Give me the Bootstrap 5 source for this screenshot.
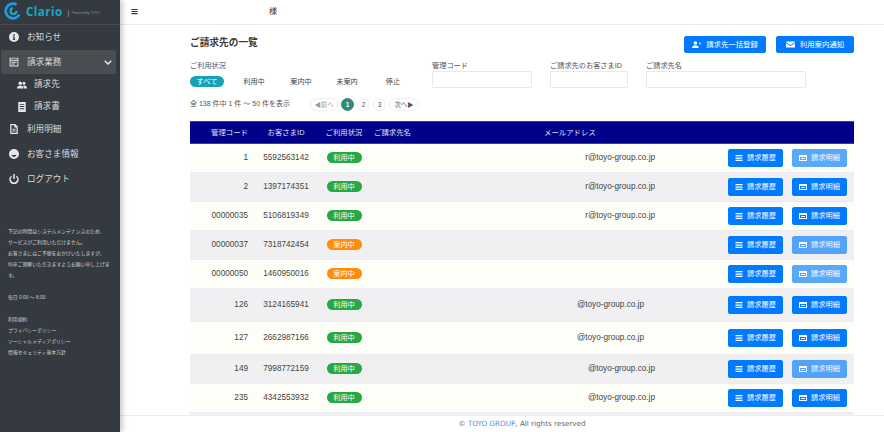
<!DOCTYPE html>
<html lang="ja">
  <head>
    <meta charset="UTF-8" />
    <meta name="viewport" content="width=device-width, initial-scale=1.0" />
    <title>ご請求先の一覧</title>
    <link rel="stylesheet" href="https://cdn.jsdelivr.net/npm/bootstrap@5.3.3/dist/css/bootstrap.min.css" />
    <script src="https://cdn.jsdelivr.net/npm/bootstrap@5.3.3/dist/js/bootstrap.bundle.min.js"></script>
    <style>
      html, body { height: 100%; overflow: hidden; }
      body { font-family: "Liberation Sans", "Noto Sans CJK JP", sans-serif; font-size: 8px; color: #444; background: #fff; }
      .app-shell { height: 432px; }
      .side { width: 120px; background: #343a40; box-shadow: 2px 0 6px rgba(0,0,0,.25); color: #d8dadc; z-index: 2; }
      .brand { height: 25px; padding: 2px 0 0 4px; border-bottom: 1px solid #454b51; gap: 4px; }
      .brand-name { font-family: "Open Sans", sans-serif; font-weight: 700; font-size: 11.5px; letter-spacing: .5px; color: #17a9c0; line-height: 19px; }
      .brand-sub { font-size: 3.4px; color: #8b9096; border-left: 1px solid #777; padding-left: 3px; margin-left: 1px; line-height: 7px; white-space: nowrap; }
      .side-nav { padding: 0 4px 0 1px; }
      .side-link { height: 24px; padding-left: 8px; font-size: 8.6px; color: #d8dadc; gap: 8px; text-decoration: none; margin-bottom: 1px; }
      .side-link.open { background: #494e53; border-radius: 2px; }
      .side-link.sub { height: 19px; padding-left: 16px; gap: 7px; margin-bottom: 2px; }
      .side-link.sub-last { height: 21px; margin-bottom: 0; }
      .side-link svg { width: 10px; height: 10px; flex: none; fill: #e6e7e8; }
      .side-link .chev { width: 8px; height: 8px; margin-right: 4px; }
      .side-note { padding: 0 8px; margin-top: 34px; font-size: 4.85px; line-height: 11px; color: #d0d2d4; }
      .side-note p { margin: 0 0 11px; }
      .top-bar { height: 25px; border-bottom: 1px solid #e9ecef; padding-left: 11px; }
      .top-bar svg { width: 7px; height: 7px; fill: #333; margin-top: -1px; }
      .top-user { margin-left: 131px; font-size: 8px; color: #333; margin-top: -1px; }
      .work { padding: 11px 30px 0 70px; min-height: 0; }
      .page-title { font-size: 9.7px; font-weight: 700; margin: 0; color: #3a3a3a; line-height: 14px; }
      .head-btn { height: 17px; font-size: 7.4px; padding: 0; border-radius: 2px; background: #007bff; border-color: #007bff; gap: 5px; }
      .head-btn svg { width: 9px; height: 9px; fill: #fff; }
      .btn-one { width: 82px; }
      .btn-two { width: 78px; margin-left: 2px; }
      .filter-row { margin-top: 8px; height: 24px; }
      .filter-label { font-size: 7.2px; line-height: 10px; color: #555; white-space: nowrap; }
      .filter-input { height: 17px; border: 1px solid #e6e9ed; border-radius: 1px; background: #fff; }
      .w-status { width: 242px; }
      .w-code { width: 100px; margin-right: 18px; }
      .w-id { width: 78px; margin-right: 18px; }
      .w-name { width: 160px; }
      .status-tabs { margin-top: 5px; font-size: 7.2px; color: #444; }
      .status-tabs span { text-align: center; line-height: 11px; }
      .status-tabs .on { background: #17a2b8; color: #fff; border-radius: 6px; }
      .tab-all { width: 34px; }
      .tab-use { width: 22px; margin-left: 19px; }
      .tab-guide { width: 22px; margin-left: 25px; }
      .tab-none { width: 22px; margin-left: 24px; }
      .tab-stop { width: 16px; margin-left: 27px; }
      .count-row { margin-top: 13px; height: 13px; }
      .count-text { width: 120px; font-size: 7px; white-space: nowrap; color: #555; }
      .pager { gap: 3px; }
      .pager span { height: 13px; min-width: 13px; border: 1px solid #eee; border-radius: 7px; font-size: 6.4px; color: #555; display: flex; align-items: center; justify-content: center; white-space: nowrap; }
      .pager .pg-prev { width: 28px; color: #999; }
      .pager .pg-next { width: 30px; }
      .pager .on { background: #2e8b77; border-color: #2e8b77; color: #fff; font-weight: 700; }
      .list-wrap { margin-top: 10px; }
      .bill-table { width: 664px; table-layout: fixed; margin: 0; font-size: 8.2px; color: #444; border-collapse: collapse; }
      .bill-table > :not(caption) > * > * { padding: 0; vertical-align: middle; background: transparent; box-shadow: none; border: 0; }
      .bill-table thead tr { height: 22px; background: #00008b; color: #dfe0f2; }
      .bill-table thead th { font-weight: 400; font-size: 7.4px; line-height: 12px; white-space: nowrap; border-top: 1px solid #3b3ba6; border-bottom: 1px solid #3b3ba6; }
      .bill-table tbody tr { height: 29px; border-bottom: 1px solid #ececf0; }
      .bill-table tbody tr.tall { height: 33px; }
      .bill-table tbody tr:nth-child(odd) { background: #fefef8; }
      .bill-table tbody tr:nth-child(even) { background: #f0f0f2; }
      .c-code { width: 62px; text-align: right; padding-right: 4px !important; }
      .c-id { width: 68px; text-align: center; }
      .c-state { width: 48px; text-align: center; }
      .c-name { width: 172px; padding-left: 6px !important; }
      .c-mail { width: 180px; text-align: right; padding-right: 65px !important; }
      th.c-mail { text-align: left; padding-left: 4px !important; padding-right: 0 !important; }
      .bill-table tbody tr.inset .c-mail { padding-right: 76px !important; }
      .c-act { padding-left: 8px !important; }
      .act-group { gap: 9px; }
      .state-pill { display: inline-block; width: 35px; height: 11px; line-height: 11px; border-radius: 6px; color: #fff; font-size: 7.2px; text-align: center; }
      .state-on { background: #28a745; }
      .state-guide { background: #ff8c0a; }
      .row-btn { width: 55px; height: 18px; padding: 0; font-size: 7.2px; border-radius: 2px; background: #007bff; border-color: #007bff; gap: 4px; }
      .row-btn svg { width: 8px; height: 8px; fill: #fff; flex: none; }
      .row-btn.disabled { background: #007bff; border-color: #007bff; opacity: .65; }
      .foot-bar { height: 17px; border-top: 1px solid #eee; background: #fff; font-family: "DejaVu Sans", sans-serif; font-size: 7.2px; color: #666; line-height: 15px; text-align: center; padding-left: 40px; }
      .foot-bar a { color: #4a90e2; text-decoration: none; }
    </style>
  </head>
  <body>
    <svg width="0" height="0" class="d-none">
      <symbol id="i-info" viewBox="0 0 16 16"><path fill-rule="evenodd" d="M8 0a8 8 0 1 1 0 16A8 8 0 0 1 8 0zM6.800 3.500v2.400h2.400V3.500zM6 7v1.400h.9v3H6v1.300h4v-1.300h-.9V7z"/></symbol>
      <symbol id="i-form" viewBox="0 0 16 16"><path fill-rule="evenodd" d="M1 1h14v14H1zM2.500 2.500v2h11v-2zM2.500 6v7.500h11V6zM4 7.500h8V9H4zM4 10.500h5V12H4z"/></symbol>
      <symbol id="i-users" viewBox="0 0 20 16"><circle cx="6.500" cy="4.500" r="3.500"/><circle cx="14" cy="4.500" r="3"/><path d="M0 15c0-4 2.500-6 6.500-6s6.500 2 6.500 6zM14 15c0-2.500-.7-4.400-2-5.600 1-.4 1.500-.4 2.500-.4 3.500 0 5.500 2 5.500 6z"/></symbol>
      <symbol id="i-doc" viewBox="0 0 16 16"><path fill-rule="evenodd" d="M2 0h12v16H2zM4.500 3v1.500h7V3zM4.500 6.500V8h7V6.500zM4.500 10v1.500h7V10z"/></symbol>
      <symbol id="i-file" viewBox="0 0 16 16"><path fill-rule="evenodd" d="M2 0h8l4 4v12H2zM4 2v12h8V5.500H8.500V2zM5.500 7.500h5V9h-5zM5.500 10.500h5V12h-5z"/></symbol>
      <symbol id="i-face" viewBox="0 0 16 16"><path fill-rule="evenodd" d="M8 0a8 8 0 1 1 0 16A8 8 0 0 1 8 0zM4 9c.5 2.200 2 3.500 4 3.500S11.500 11.200 12 9c-2.500.8-5.500.8-8 0z"/></symbol>
      <symbol id="i-power" viewBox="0 0 16 16"><path d="M6.800 0h2.400v8H6.800z"/><path d="M4.500 2.200v2.700a5 5 0 1 0 7 0V2.200a7.500 7.500 0 1 1-7 0z"/></symbol>
      <symbol id="i-chev" viewBox="0 0 16 16"><path d="M2.500 4.500 8 10l5.500-5.500 2 2L8 14 .5 6.500z"/></symbol>
      <symbol id="i-bars" viewBox="0 0 16 16"><path d="M1 2h14v2.500H1zM1 6.800h14v2.500H1zM1 11.500h14V14H1z"/></symbol>
      <symbol id="i-card" viewBox="0 0 16 16"><path fill-rule="evenodd" d="M1 2h14a1 1 0 0 1 1 1v10a1 1 0 0 1-1 1H1a1 1 0 0 1-1-1V3a1 1 0 0 1 1-1zM2 6v6h12V6zM4 8h8v2H4z"/></symbol>
      <symbol id="i-useradd" viewBox="0 0 20 16"><circle cx="7.500" cy="4.500" r="4"/><path d="M0 15.500c0-4 3-6 7.500-6s7.500 2 7.500 6zM15 5h2V3h1.500v2h1.500v1.500h-1.500v2H17v-2h-2z"/></symbol>
      <symbol id="i-mail" viewBox="0 0 16 16"><path d="M1 2.500h14a1 1 0 0 1 1 1v.6L8 9 0 4.100v-.6a1 1 0 0 1 1-1zM0 5.800 8 10.700l8-4.900v6.700a1 1 0 0 1-1 1H1a1 1 0 0 1-1-1z"/></symbol>
    </svg>

    <div class="app-shell d-flex">
      <aside class="side flex-shrink-0 d-flex flex-column">
        <div class="brand d-flex align-items-start">
          <svg width="18" height="18" viewBox="0 0 18 18">
            <circle cx="9" cy="9" r="7.300" fill="none" stroke="#1b9be0" stroke-width="2.800" stroke-dasharray="34 12" transform="rotate(30 9 9)"/>
            <circle cx="9.500" cy="9" r="3" fill="none" stroke="#17b3c9" stroke-width="2" stroke-dasharray="13 6"/>
          </svg>
          <span class="brand-name">Clario</span>
          <span class="brand-sub mt-2">Powered by TOYO</span>
        </div>
        <nav class="side-nav d-flex flex-column">
          <a class="side-link d-flex align-items-center" href="#"><svg><use href="#i-info"/></svg>お知らせ</a>
          <a class="side-link open d-flex align-items-center" href="#"><svg><use href="#i-form"/></svg>請求業務<svg class="chev ms-auto"><use href="#i-chev"/></svg></a>
          <a class="side-link sub d-flex align-items-center" href="#"><svg><use href="#i-users"/></svg>請求先</a>
          <a class="side-link sub sub-last d-flex align-items-center" href="#"><svg><use href="#i-doc"/></svg>請求書</a>
          <a class="side-link d-flex align-items-center" href="#"><svg><use href="#i-file"/></svg>利用明細</a>
          <a class="side-link d-flex align-items-center" href="#"><svg><use href="#i-face"/></svg>お客さま情報</a>
          <a class="side-link d-flex align-items-center" href="#"><svg><use href="#i-power"/></svg>ログアウト</a>
        </nav>
        <div class="side-note">
          <p>下記の時間はシステムメンテナンスのため、<br />サービスがご利用いただけません。<br />お客さまにはご不便をおかけいたしますが、<br />何卒ご理解いただきますようお願い申し上げます。</p>
          <p>毎日 0:00 ～ 6:00</p>
          <div>利用規約</div>
          <div>プライバシーポリシー</div>
          <div>ソーシャルメディアポリシー</div>
          <div>情報セキュリティ基本方針</div>
        </div>
      </aside>

      <div class="flex-grow-1 d-flex flex-column overflow-hidden">
        <header class="top-bar d-flex align-items-center flex-shrink-0">
          <svg><use href="#i-bars"/></svg>
          <span class="top-user">様</span>
        </header>

        <main class="work flex-grow-1 overflow-hidden">
          <div class="d-flex justify-content-between align-items-start">
            <h1 class="page-title">ご請求先の一覧</h1>
            <div class="d-flex gap-2">
              <button class="btn btn-primary head-btn btn-one d-flex align-items-center justify-content-center"><svg viewBox="0 0 20 16"><use href="#i-useradd"/></svg>請求先一括登録</button>
              <button class="btn btn-primary head-btn btn-two d-flex align-items-center justify-content-center"><svg><use href="#i-mail"/></svg>利用案内通知</button>
            </div>
          </div>

          <div class="filter-row d-flex">
            <div class="w-status">
              <div class="filter-label">ご利用状況</div>
              <div class="status-tabs d-flex">
                <span class="on tab-all">すべて</span>
                <span class="tab-use">利用中</span>
                <span class="tab-guide">案内中</span>
                <span class="tab-none">未案内</span>
                <span class="tab-stop">停止</span>
              </div>
            </div>
            <div class="w-code">
              <div class="filter-label">管理コード</div>
              <div class="filter-input"></div>
            </div>
            <div class="w-id">
              <div class="filter-label">ご請求先のお客さまID</div>
              <div class="filter-input"></div>
            </div>
            <div class="w-name">
              <div class="filter-label">ご請求先名</div>
              <div class="filter-input"></div>
            </div>
          </div>

          <div class="count-row d-flex align-items-center">
            <div class="count-text">全 138 件中 1 件 ～ 50 件を表示</div>
            <div class="pager d-flex">
              <span class="pg-prev">◀前へ</span>
              <span class="on">1</span>
              <span>2</span>
              <span>3</span>
              <span class="pg-next">次へ▶</span>
            </div>
          </div>

          <div class="list-wrap">
            <table class="table bill-table">
              <thead>
                <tr>
                  <th class="c-code">管理コード</th>
                  <th class="c-id">お客さまID</th>
                  <th class="c-state">ご利用状況</th>
                  <th class="c-name">ご請求先名</th>
                  <th class="c-mail">メールアドレス</th>
                  <th></th>
                </tr>
              </thead>
              <tbody id="billRows"></tbody>
            </table>
          </div>
        </main>

        <footer class="foot-bar flex-shrink-0">© <a href="#">TOYO GROUP</a>, All rights reserved</footer>
      </div>
    </div>

    <script>
      // code, id, state, mail, row look, detail button off
      const rows = [
        ["1", "5592563142", "on", "r@toyo-group.co.jp", "", true],
        ["2", "1397174351", "on", "r@toyo-group.co.jp", "", false],
        ["00000035", "5106819349", "on", "r@toyo-group.co.jp", "", false],
        ["00000037", "7318742454", "guide", "", "", true],
        ["00000050", "1460950016", "guide", "", "", true],
        ["126", "3124165941", "on", "@toyo-group.co.jp", "tall inset", false],
        ["127", "2662987166", "on", "@toyo-group.co.jp", "tall inset", false],
        ["149", "7998772159", "on", "@toyo-group.co.jp", "", true],
        ["235", "4342553932", "on", "@toyo-group.co.jp", "", false],
      ];

      const billRows = document.querySelector("#billRows");
      rows.forEach((r) => {
        const tr = document.createElement("tr");
        tr.className = r[4];
        const pill = r[2] === "on"
          ? '<span class="state-pill state-on">利用中</span>'
          : '<span class="state-pill state-guide">案内中</span>';
        tr.innerHTML = `
          <td class="c-code">${r[0]}</td>
          <td class="c-id">${r[1]}</td>
          <td class="c-state">${pill}</td>
          <td class="c-name"></td>
          <td class="c-mail">${r[3]}</td>
          <td class="c-act">
            <div class="d-flex act-group">
              <button class="btn btn-primary row-btn d-flex align-items-center justify-content-center"><svg><use href="#i-bars"/></svg>請求履歴</button>
              <button class="btn btn-primary row-btn d-flex align-items-center justify-content-center ${r[5] ? "disabled" : ""}"><svg><use href="#i-card"/></svg>請求明細</button>
            </div>
          </td>`;
        billRows.appendChild(tr);
      });

      // the next row only shows as a sliver above the footer
      const lastRow = document.createElement("tr");
      lastRow.innerHTML = '<td colspan="6"></td>';
      billRows.appendChild(lastRow);
    </script>
  </body>
</html>
